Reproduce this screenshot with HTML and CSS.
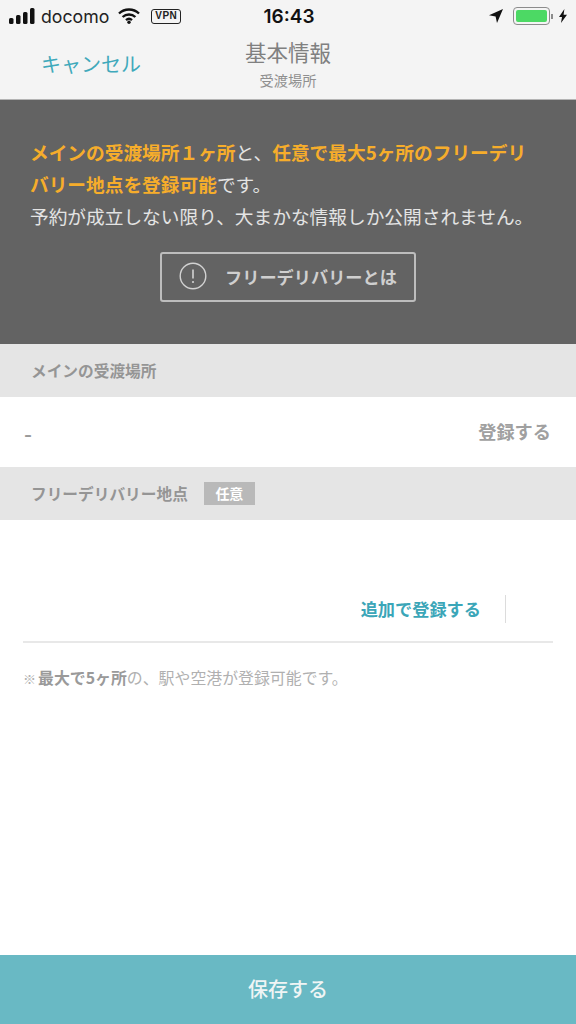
FILE: index.html
```html
<!DOCTYPE html>
<html lang="ja">
<head>
  <meta charset="UTF-8" />
  <title>基本情報</title>
  <meta name="viewport" content="width=device-width, initial-scale=1.0" />
  <link rel="stylesheet" href="styles.css">
</head>
<body>
  <div class="page">
    <header class="top">
      <div class="status">
        <div class="status-left">
          <svg class="signal" width="26" height="16" viewBox="0 0 26 16">
            <rect x="0" y="10" width="4.5" height="6" rx="1.5" />
            <rect x="7" y="7" width="4.5" height="9" rx="1.5" />
            <rect x="14" y="4" width="4.5" height="12" rx="1.5" />
            <rect x="21" y="0" width="4.5" height="16" rx="1.5" />
          </svg>
          <span class="carrier">docomo</span>
          <svg class="wifi" width="22" height="16" viewBox="0 0 22 16">
            <path d="M1 5.5a14.5 14.5 0 0 1 20 0" />
            <path d="M4.6 9a9.3 9.3 0 0 1 12.8 0" />
            <path d="M8 12.2a4.5 4.5 0 0 1 6 0" />
            <circle cx="11" cy="14.2" r="1.7" class="dot" />
          </svg>
          <span class="vpn">VPN</span>
        </div>
        <div class="clock">16:43</div>
        <div class="status-right">
          <svg width="14" height="14" viewBox="0 0 14 14"><path d="M14 0 0 6.2l6.6 1.2L8 14z" fill="#111" /></svg>
          <div class="battery"><div class="battery-fill"></div></div>
          <span class="battery-cap"></span>
          <svg width="8" height="14" viewBox="0 0 8 14"><path d="M5.4 0 0 8h3l-1 6 6-8.2H4.6z" fill="#111" /></svg>
        </div>
      </div>
      <div class="nav">
        <a class="cancel">キャンセル</a>
        <div class="nav-title">
          <div class="title">基本情報</div>
          <div class="subtitle">受渡場所</div>
        </div>
      </div>
    </header>

    <section class="notice">
      <p class="notice-text"><b>メインの受渡場所１ヶ所</b>と、<b>任意で最大5ヶ所のフリーデリバリー地点を登録可能</b>です。<br>予約が成立しない限り、大まかな情報しか公開されません。</p>
      <a class="notice-btn">
        <svg width="28" height="28" viewBox="0 0 28 28">
          <circle cx="14" cy="14" r="12.8" fill="none" stroke="#d2d2d2" stroke-width="1.4" />
          <path d="M14 7.5v9" stroke="#d2d2d2" stroke-width="1.6" />
          <circle cx="14" cy="20" r="1.1" fill="#d2d2d2" />
        </svg>
        <span>フリーデリバリーとは</span>
      </a>
    </section>

    <div class="section-head">メインの受渡場所</div>
    <div class="main-row">
      <span class="dash">-</span>
      <a class="register">登録する</a>
    </div>
    <div class="section-head section-head-free">
      フリーデリバリー地点
      <span class="tag">任意</span>
    </div>

    <div class="add-row">
      <a class="add-link">追加で登録する</a>
      <span class="add-sep"></span>
    </div>
    <p class="note"><span class="note-mark">※</span><b>最大で5ヶ所</b>の、駅や空港が登録可能です。</p>

    <a class="save">保存する</a>
  </div>
</body>
</html>
```

FILE: styles.css
```css
* {
  box-sizing: border-box;
}

body {
  margin: 0;
  font-family: "Noto Sans CJK JP", "Noto Sans", sans-serif;
  background: #fff;
}

.page {
  width: 576px;
  height: 1024px;
  display: flex;
  flex-direction: column;
  overflow: hidden;
}

.top {
  height: 100px;
  background: #f4f4f4;
  border-bottom: 1px solid #b4b4b4;
}

.status {
  height: 32px;
  padding: 0 9px;
  display: grid;
  grid-template-columns: 1fr auto 1fr;
  align-items: center;
}

.status-left {
  display: flex;
  align-items: center;
}

.signal {
  fill: #111;
  margin-right: 6px;
}

.carrier {
  font-family: Inter, sans-serif;
  font-size: 17.7px;
  color: #222;
  margin-right: 9px;
}

.wifi {
  margin-right: 11px;
}

.wifi path {
  fill: none;
  stroke: #111;
  stroke-width: 2.4;
}

.wifi .dot {
  fill: #111;
}

.vpn {
  font-family: "Liberation Sans", sans-serif;
  font-size: 10px;
  font-weight: bold;
  letter-spacing: 0.5px;
  color: #222;
  border: 1.5px solid #222;
  border-radius: 3px;
  padding: 0 3px;
  height: 15px;
  line-height: 12px;
}

.clock {
  font-family: Inter, sans-serif;
  font-size: 19px;
  font-weight: 600;
  color: #111;
  padding-left: 2px;
}

.status-right {
  display: flex;
  justify-content: flex-end;
  align-items: center;
}

.battery {
  width: 37px;
  height: 18px;
  margin-left: 10px;
  padding: 2px;
  border: 1.5px solid #8c8c8c;
  border-radius: 4px;
}

.battery-fill {
  height: 100%;
  background: #4cd964;
  border-radius: 2px;
}

.battery-cap {
  width: 2px;
  height: 5px;
  margin: 0 6px 0 1px;
  background: #8c8c8c;
}

.nav {
  height: 67px;
  position: relative;
  display: flex;
  align-items: center;
  justify-content: center;
}

.cancel {
  position: absolute;
  left: 41px;
  top: 14px;
  font-size: 20px;
  line-height: 35px;
  color: #3fa9bb;
}

.nav-title {
  text-align: center;
  margin-bottom: 4px;
}

.title {
  font-size: 21.5px;
  line-height: 30px;
  color: #808080;
}

.subtitle {
  margin-top: 2px;
  font-size: 14.2px;
  line-height: 22px;
  color: #8f8f8f;
}

.notice {
  height: 244px;
  padding: 36px 40px 0 30px;
  background: #636363;
}

.notice-text {
  margin: 0;
  font-size: 18.7px;
  line-height: 32px;
  color: #e4e4e4;
}

.notice-text b {
  color: #f6ad2b;
  font-weight: bold;
}

.notice-btn {
  width: 256px;
  height: 50px;
  margin: 20px 0 0 130px;
  padding: 0 0 2px 17px;
  display: flex;
  align-items: center;
  gap: 18px;
  border: 2px solid #bdbdbd;
  border-radius: 3px;
  font-size: 17.2px;
  font-weight: 700;
  color: #cfcfcf;
}

.section-head {
  height: 53px;
  padding: 0 31px;
  display: flex;
  align-items: center;
  background: #e5e5e5;
  font-size: 15.7px;
  font-weight: 700;
  color: #959595;
}

.main-row {
  height: 70px;
  padding: 0 25px 2px 24px;
  display: flex;
  align-items: center;
  justify-content: space-between;
  color: #8e8e8e;
}

.dash {
  margin-top: 5px;
  font-family: "Liberation Sans", sans-serif;
  font-size: 24px;
  color: #9a9a9a;
}

.register {
  font-size: 18.2px;
  font-weight: 700;
  color: #a0a0a0;
}

.section-head-free {
  gap: 16px;
}

.tag {
  width: 51px;
  height: 23px;
  background: #b9b9b9;
  color: #fff;
  font-size: 14px;
  line-height: 23px;
  text-align: center;
}

.add-row {
  height: 123px;
  margin: 0 23px;
  padding: 75px 47px 19px 0;
  display: flex;
  justify-content: flex-end;
  align-items: center;
  gap: 24px;
  border-bottom: 2px solid #e8e8e8;
}

.add-link {
  font-size: 17.2px;
  font-weight: 700;
  color: #3ba6b8;
}

.add-sep {
  width: 1px;
  height: 28px;
  background: #dcdcdc;
}

.note {
  margin: 24px 0 0 23px;
  font-size: 15.9px;
  line-height: 22px;
  color: #b0b0b0;
}

.note-mark {
  display: inline-block;
  width: 15px;
  font-size: 13px;
  font-weight: bold;
}

.note b {
  color: #9a9a9a;
}

.save {
  margin-top: auto;
  height: 69px;
  padding-bottom: 2px;
  display: flex;
  align-items: center;
  justify-content: center;
  background: #69b9c4;
  color: #f0f5f5;
  font-size: 20px;
  font-weight: 500;
}
```
